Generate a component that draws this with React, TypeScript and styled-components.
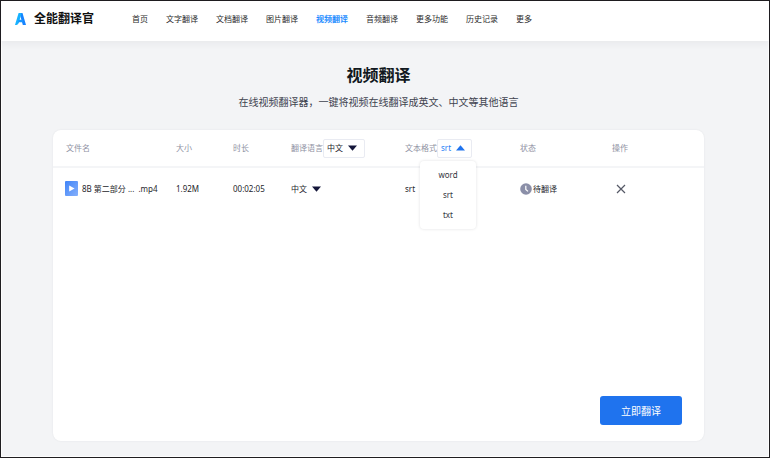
import React, { useState } from "react";
import styled, { createGlobalStyle } from "styled-components";

const GlobalStyle = createGlobalStyle`
  *, *::before, *::after { box-sizing: border-box; }
  body { margin: 0; }
  body, button, select {
    font-family: "Noto Sans", "Noto Sans CJK SC", sans-serif;
    font-size: 8px;
    line-height: 12px;
    color: #25262b;
  }
`;

const Page = styled.div`
  min-height: 100vh;
  display: flex;
  flex-direction: column;
  border: 1px solid #1f1d20;
  background: #f3f4f6;
  box-shadow: inset 0 0 0 1px #fdfdfd;
`;

const Header = styled.header`
  display: flex;
  align-items: center;
  height: 40px;
  padding: 0 12px 4px;
  background: #fff;
  box-shadow: 0 2px 8px rgba(30, 35, 45, 0.06);
`;

const Brand = styled.a`
  display: flex;
  align-items: center;
  gap: 6px;
  width: 119px;
  font-size: 12px;
  line-height: 16px;
  font-weight: 700;
  color: #111;
  text-decoration: none;
  white-space: nowrap;
`;

const Nav = styled.nav`
  display: flex;
  gap: 18px;
`;

const NavLink = styled.a<{ $active?: boolean }>`
  color: ${(p) => (p.$active ? "#1d8cff" : "#2b2b2b")};
  font-weight: ${(p) => (p.$active ? 700 : 400)};
  text-decoration: none;
  white-space: nowrap;
`;

const Main = styled.main`
  flex: 1;
  display: flex;
  flex-direction: column;
  padding: 22px 65px 16px 52px;
`;

const Title = styled.h1`
  margin: 0;
  font-size: 16px;
  line-height: 24px;
  font-weight: 700;
  text-align: center;
  color: #111820;
`;

const Subtitle = styled.p`
  margin: 7px 0 20px;
  font-size: 10px;
  line-height: 16px;
  text-align: center;
  color: #40434f;
`;

const Card = styled.section`
  flex: 1;
  display: flex;
  flex-direction: column;
  justify-content: space-between;
  background: #fff;
  border-radius: 8px;
  box-shadow: 0 0 2px rgba(30, 35, 45, 0.08);
`;

const Table = styled.table`
  width: 100%;
  table-layout: fixed;
  border-collapse: collapse;
`;

const Th = styled.th`
  height: 37px;
  padding: 0;
  border-bottom: 2px solid #f4f5f7;
  font-weight: 400;
  text-align: left;
  color: #8f92a3;
  white-space: nowrap;
  &:first-child { padding-left: 13px; }
`;

const Td = styled.td`
  height: 42px;
  padding: 0;
  white-space: nowrap;
  &:first-child { padding-left: 12px; }
`;

const Inline = styled.div<{ $gap: number }>`
  display: flex;
  align-items: center;
  gap: ${(p) => p.$gap}px;
`;

const SelectBox = styled.span<{ $framed?: boolean }>`
  display: inline-grid;
  grid-template-columns: 1fr 9px;
  align-items: center;
  width: ${(p) => (p.$framed ? "42px" : "30px")};
  height: 19px;
  padding: ${(p) => (p.$framed ? "0 7px 0 3px" : "0")};
  border: ${(p) => (p.$framed ? "1px solid #e9ebf2" : "0")};
  border-radius: 2px;
`;

const Select = styled.select`
  grid-area: 1 / 1 / 2 / 3;
  width: 100%;
  padding: 0;
  border: 0;
  appearance: none;
  background: transparent;
  color: #25262b;
`;

const Arrow = styled.svg`
  grid-area: 1 / 2 / 2 / 3;
  width: 9px;
  height: 6px;
  pointer-events: none;
`;

const MenuAnchor = styled.div`
  position: relative;
`;

const MenuButton = styled.button`
  display: flex;
  align-items: center;
  justify-content: space-between;
  width: 35px;
  height: 19px;
  padding: 0 6px 0 3px;
  border: 1px solid #e9ebf2;
  border-radius: 2px;
  background: #fff;
  color: #2b83f6;
`;

const Menu = styled.ul`
  position: absolute;
  z-index: 1;
  top: 22px;
  right: -4px;
  width: 56px;
  margin: 0;
  padding: 4px 0;
  list-style: none;
  border-radius: 4px;
  background: #fff;
  box-shadow: 0 0 3px rgba(30, 35, 45, 0.14);
`;

const Option = styled.li`
  line-height: 20px;
  text-align: center;
  color: #34363d;
  cursor: pointer;
`;

const FileName = styled.span`
  display: flex;
  gap: 4px;
`;

const IconButton = styled.button`
  display: flex;
  margin-left: 4px;
  padding: 0;
  border: 0;
  background: transparent;
`;

const Footer = styled.div`
  display: flex;
  justify-content: flex-end;
  padding: 0 22px 16px;
`;

const Submit = styled.button`
  width: 82px;
  height: 29px;
  padding: 0;
  border: 0;
  border-radius: 3px;
  background: #1f73ee;
  color: #fff;
  font-size: 10px;
`;

const NAV = ["首页", "文字翻译", "文档翻译", "图片翻译", "视频翻译", "音频翻译", "更多功能", "历史记录", "更多"];
const COLUMNS = [123, 57, 58, 114, 115, 92, 92];
const FORMATS = ["word", "srt", "txt"];

function Logo() {
  return (
    <svg width="15" height="16" viewBox="0 0 15 16" aria-hidden="true">
      <path d="M6 2h3.500L13 14h-3.200L7.500 5.500Z" fill="#1683ff" />
      <path d="M2 14 5.600 2h3L6 11.200C5.400 13.200 4.200 14 2 14Z" fill="#16b2ff" />
      <path d="M5.600 8.800h4l.7 2.400H5Z" fill="#1a96ff" />
    </svg>
  );
}

function Triangle({ up = false }: { up?: boolean }) {
  return (
    <Arrow viewBox="0 0 9 6" aria-hidden="true">
      <path d={up ? "M0 5.600 4.500.2 9 5.600Z" : "M0 .4h9L4.500 5.800Z"} fill={up ? "#1f73ee" : "#14163a"} />
    </Arrow>
  );
}

function LanguageSelect({ id, label, framed }: { id?: string; label?: string; framed?: boolean }) {
  return (
    <SelectBox $framed={framed}>
      <Select id={id} aria-label={label} defaultValue="中文">
        <option>中文</option>
        <option>英文</option>
      </Select>
      <Triangle />
    </SelectBox>
  );
}

function FormatMenu() {
  const [open, setOpen] = useState(true);
  const [format, setFormat] = useState("srt");
  const choose = (value: string) => {
    setFormat(value);
    setOpen(false);
  };
  return (
    <MenuAnchor>
      <MenuButton
        type="button"
        aria-haspopup="listbox"
        aria-expanded={open}
        aria-labelledby="format-label"
        onClick={() => setOpen(!open)}
      >
        {format}
        <Triangle up={open} />
      </MenuButton>
      {open && (
        <Menu role="listbox" aria-labelledby="format-label">
          {FORMATS.map((f) => (
            <Option key={f} role="option" aria-selected={f === format} onClick={() => choose(f)}>
              {f}
            </Option>
          ))}
        </Menu>
      )}
    </MenuAnchor>
  );
}

function VideoIcon() {
  return (
    <svg width="13" height="15" viewBox="0 0 13 15" aria-hidden="true">
      <defs>
        <linearGradient id="video" x1="0" x2="1" y1="0" y2="1">
          <stop offset="0" stopColor="#3f84f8" />
          <stop offset="1" stopColor="#86b0fb" />
        </linearGradient>
      </defs>
      <rect width="13" height="15" rx="1" fill="url(#video)" />
      <path d="M4.200 4.400v6.200l5.400-3.100Z" fill="#fff" />
    </svg>
  );
}

function ClockIcon() {
  return (
    <svg width="12" height="12" viewBox="0 0 12 12" aria-hidden="true">
      <circle cx="6" cy="6" r="5.800" fill="#8b8fa8" />
      <path d="M5.800 2.800v3.600l2.200 2" fill="none" stroke="#fff" strokeWidth="1.200" />
    </svg>
  );
}

function CloseIcon() {
  return (
    <svg width="10" height="10" viewBox="0 0 10 10" aria-hidden="true">
      <path d="m1 1 8 8M9 1 1 9" fill="none" stroke="#555966" strokeWidth="1.200" />
    </svg>
  );
}

export default function App() {
  return (
    <>
      <GlobalStyle />
      <Page>
        <Header>
          <Brand href="#">
            <Logo />
            全能翻译官
          </Brand>
          <Nav>
            {NAV.map((item) => (
              <NavLink key={item} href="#" $active={item === "视频翻译"}>
                {item}
              </NavLink>
            ))}
          </Nav>
        </Header>
        <Main>
          <Title>视频翻译</Title>
          <Subtitle>在线视频翻译器，一键将视频在线翻译成英文、中文等其他语言</Subtitle>
          <Card>
            <Table>
              <colgroup>
                {COLUMNS.map((width, i) => (
                  <col key={i} width={width} />
                ))}
              </colgroup>
              <thead>
                <tr>
                  <Th>文件名</Th>
                  <Th>大小</Th>
                  <Th>时长</Th>
                  <Th>
                    <Inline $gap={0}>
                      <label htmlFor="language">翻译语言</label>
                      <LanguageSelect id="language" framed />
                    </Inline>
                  </Th>
                  <Th>
                    <Inline $gap={0}>
                      <span id="format-label">文本格式</span>
                      <FormatMenu />
                    </Inline>
                  </Th>
                  <Th>状态</Th>
                  <Th>操作</Th>
                </tr>
              </thead>
              <tbody>
                <tr>
                  <Td>
                    <Inline $gap={4}>
                      <VideoIcon />
                      <FileName>
                        <span>8B 第二部分 ...</span>
                        <span>.mp4</span>
                      </FileName>
                    </Inline>
                  </Td>
                  <Td>1.92M</Td>
                  <Td>00:02:05</Td>
                  <Td>
                    <LanguageSelect label="翻译语言" />
                  </Td>
                  <Td>srt</Td>
                  <Td>
                    <Inline $gap={1}>
                      <ClockIcon />
                      待翻译
                    </Inline>
                  </Td>
                  <Td>
                    <IconButton type="button" aria-label="删除">
                      <CloseIcon />
                    </IconButton>
                  </Td>
                </tr>
              </tbody>
            </Table>
            <Footer>
              <Submit type="button">立即翻译</Submit>
            </Footer>
          </Card>
        </Main>
      </Page>
    </>
  );
}
